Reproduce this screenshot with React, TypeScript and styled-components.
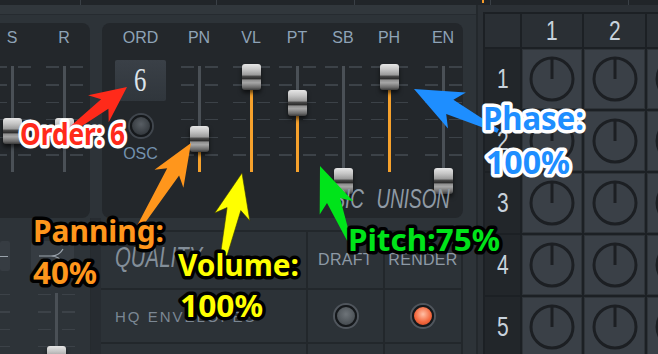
import React from 'react';
import styled, { createGlobalStyle } from 'styled-components';

const GlobalStyle = createGlobalStyle`
  html, body {
    margin: 0;
    padding: 0;
    background: #2b3035;
  }
  body {
    font-family: 'Liberation Sans', Arial, sans-serif;
  }
`;

type Slider = { label: string; value: number; fill: boolean; ml: number };

const SIDE_SLIDERS: Slider[] = [
  { label: 'S', value: 0.48, fill: false, ml: -6.5 },
  { label: 'R', value: 0.48, fill: false, ml: 15 },
];

const MAIN_SLIDERS: Slider[] = [
  { label: 'PN', value: 0.4, fill: true, ml: 14.5 },
  { label: 'VL', value: 1, fill: true, ml: 15 },
  { label: 'PT', value: 0.75, fill: true, ml: 9 },
  { label: 'SB', value: 0, fill: false, ml: 9 },
  { label: 'PH', value: 1, fill: true, ml: 9 },
  { label: 'EN', value: 0, fill: false, ml: 17 },
];

const STRIP = [80, 135, 137, 135, 137, 40];

const TRACK_H = 106;

// handle centre sits between 64px and 168px on the page, track starts at 66px
const handleTop = (v: number) => -2 + (1 - v) * 104;

export default function App() {
  return (
    <>
      <GlobalStyle />
      <Root>
        <TopStrip>
          {STRIP.map((w, i) => (
            <StripSeg key={i} $w={w}>
              {i === 3 && <OrangeMark />}
            </StripSeg>
          ))}
        </TopStrip>

        <Body>
          <LeftPanel>
            <Band />
            <UpperRow>
              <SidePanel>
                {SIDE_SLIDERS.map((s) => (
                  <SliderColumn key={s.label} {...s} />
                ))}
              </SidePanel>

              <MainPanel>
                <Columns>
                  <OrdColumn>
                    <Label>ORD</Label>
                    <OrdBox>
                      <OrdValue>6</OrdValue>
                    </OrdBox>
                    <Toggle />
                    <OscLabel>OSC</OscLabel>
                  </OrdColumn>
                  {MAIN_SLIDERS.map((s) => (
                    <SliderColumn key={s.label} {...s} />
                  ))}
                </Columns>
                <Footer>
                  <ModeText $mr={-19}>SIC</ModeText>
                  <ModeText>UNISON</ModeText>
                </Footer>
              </MainPanel>
            </UpperRow>

            <LowerRow>
              <LowerLeft>
                <BoxRow>
                  <SmallBox $w={10}>
                    <Dash />
                  </SmallBox>
                  <SmallBox $w={43} $ml={21}>
                    <svg width='43' height='30' viewBox='0 0 43 30'>
                      <path
                        d='M8 15 H20 Q28 15 32 8 M20 15 Q28 15 32 22'
                        stroke='#9aa3ac'
                        strokeWidth='1.2'
                        fill='none'
                      />
                    </svg>
                  </SmallBox>
                </BoxRow>
                <LowerSlider>
                  <Ticks $w={10} $h={70} />
                  <Ticks $w={13} $h={70} $ml={23.5} />
                  <Track $h={70}>
                    <Handle style={{ top: 53 }} />
                  </Track>
                  <Ticks $w={13} $h={70} />
                </LowerSlider>
              </LowerLeft>
              <Divider />
              <Table>
                <Cell>
                  <QualityText>QUALITY</QualityText>
                </Cell>
                <Cell $center>
                  <HeadText>DRAFT</HeadText>
                </Cell>
                <Cell $center>
                  <HeadText>RENDER</HeadText>
                </Cell>
                <Cell>
                  <HqText>HQ ENVELOPES</HqText>
                </Cell>
                <Cell $center>
                  <Led />
                </Cell>
                <Cell $center>
                  <Led $on />
                </Cell>
                <Cell />
                <Cell />
                <Cell />
              </Table>
            </LowerRow>
          </LeftPanel>

          <GridWrap>
            <KnobGrid>
              <HeadCell />
              {[1, 2, 3].map((n) => (
                <HeadCell key={n}>
                  <Num>{n}</Num>
                </HeadCell>
              ))}
              {[1, 2, 3, 4, 5].map((r) => (
                <React.Fragment key={r}>
                  <RowCell>
                    <Num>{r}</Num>
                  </RowCell>
                  {[1, 2, 3].map((c) => (
                    <KnobCell key={c}>
                      <Knob />
                    </KnobCell>
                  ))}
                </React.Fragment>
              ))}
            </KnobGrid>
          </GridWrap>
        </Body>

        <Annotations />
      </Root>
    </>
  );
}

function SliderColumn({ label, value, fill, ml }: Slider) {
  const top = handleTop(value);
  const split = Math.max(0, ((top + 13) / TRACK_H) * 100);
  return (
    <Column $ml={ml}>
      <Label>{label}</Label>
      <SliderBody>
        <Ticks $w={13} $h={TRACK_H} />
        <Track $h={TRACK_H} $fill={fill} $split={split}>
          <Handle style={{ top }} />
        </Track>
        <Ticks $w={13} $h={TRACK_H} />
      </SliderBody>
    </Column>
  );
}

function Knob() {
  return (
    <svg width='46' height='46' viewBox='0 0 46 46'>
      <circle cx='23' cy='23' r='21' stroke='#1c1f23' strokeWidth='3' fill='none' />
      <line x1='23' y1='3' x2='23' y2='23' stroke='#1c1f23' strokeWidth='3' />
    </svg>
  );
}

function arrow(tx: number, ty: number, px: number, py: number, head: number, half: number, shaft: number) {
  const dx = px - tx;
  const dy = py - ty;
  const len = Math.hypot(dx, dy);
  const ux = dx / len;
  const uy = dy / len;
  const nx = -uy;
  const ny = ux;
  const bx = px - ux * head;
  const by = py - uy * head;
  const back = 8;
  const pts = [
    [tx + nx * 2, ty + ny * 2],
    [bx + nx * shaft, by + ny * shaft],
    [bx - ux * back + nx * half, by - uy * back + ny * half],
    [px, py],
    [bx - ux * back - nx * half, by - uy * back - ny * half],
    [bx - nx * shaft, by - ny * shaft],
    [tx - nx * 2, ty - ny * 2],
  ];
  return pts.map((p) => p.map((n) => n.toFixed(1)).join(',')).join(' ');
}

type Note = { text: string; x: number; y: number; size: number; len: number; fill: string; stroke: string };

const NOTES: Note[] = [
  { text: 'Order: 6', x: 20, y: 145, size: 31, len: 105, fill: '#ff2a1a', stroke: '#ffffff' },
  { text: 'Panning:', x: 33, y: 242, size: 30, len: 131, fill: '#ff961c', stroke: '#000000' },
  { text: '40%', x: 33, y: 284, size: 30, len: 64, fill: '#ff961c', stroke: '#000000' },
  { text: 'Volume:', x: 178, y: 276, size: 30, len: 121, fill: '#ffff00', stroke: '#000000' },
  { text: '100%', x: 180, y: 317, size: 30, len: 83, fill: '#ffff00', stroke: '#000000' },
  { text: 'Pitch:75%', x: 348, y: 251, size: 31, len: 152, fill: '#00e41a', stroke: '#000000' },
  { text: 'Phase:', x: 483, y: 130, size: 32, len: 101, fill: '#1e8eff', stroke: '#ffffff' },
  { text: '100%', x: 486, y: 174, size: 32, len: 84, fill: '#1e8eff', stroke: '#ffffff' },
];

function Annotations() {
  return (
    <Overlay width='658' height='354' viewBox='0 0 658 354'>
      <polygon points={arrow(60, 138, 127, 87, 28, 17, 6)} fill='#ff2a1a' />
      <polygon points={arrow(136, 232, 191, 143, 34, 17, 7)} fill='#ff961c' />
      <polygon points={arrow(220, 272, 242, 173, 37, 18, 7)} fill='#ffff00' stroke='#3a3a00' strokeWidth='0.6' />
      <polygon points={arrow(349, 240, 320, 166, 37, 18, 7)} fill='#00e41a' />
      <polygon points={arrow(498, 131, 414, 89, 40, 20, 8)} fill='#1e8eff' />
      {NOTES.map((n) => (
        <NoteText
          key={n.text + n.x}
          x={n.x}
          y={n.y}
          fontSize={n.size}
          textLength={n.len}
          lengthAdjust='spacingAndGlyphs'
          fill={n.fill}
          stroke={n.stroke}
        >
          {n.text}
        </NoteText>
      ))}
    </Overlay>
  );
}

const Root = styled.div`
  position: relative;
  width: 658px;
  height: 354px;
  overflow: hidden;
  background: #2b3035;
  display: flex;
  flex-direction: column;
`;

const TopStrip = styled.div`
  flex: none;
  height: 5px;
  display: flex;
  background: #212529;
`;

const StripSeg = styled.div<{ $w: number }>`
  flex: none;
  width: ${(p) => p.$w}px;
  border-right: 1px solid #3a4046;
  display: flex;
  align-items: flex-start;
`;

const OrangeMark = styled.div`
  width: 2px;
  height: 3px;
  margin-left: 127px;
  background: #f59b2a;
`;

const Body = styled.div`
  flex: 1;
  display: flex;
  min-height: 0;
`;

const LeftPanel = styled.div`
  flex: none;
  width: 476px;
  display: flex;
  flex-direction: column;
  background: #2d3338;
  border-right: 2px solid #23282c;
  overflow: hidden;
`;

const Band = styled.div`
  flex: none;
  height: 9px;
  background: #31373c;
  border-bottom: 1px solid #262b30;
`;

const UpperRow = styled.div`
  flex: none;
  display: flex;
  gap: 12px;
  padding-top: 8px;
`;

const SidePanel = styled.div`
  flex: none;
  width: 90px;
  height: 195px;
  display: flex;
  align-items: flex-start;
  padding-top: 7px;
  box-sizing: border-box;
  background: #23272b;
  border-radius: 0 8px 8px 0;
  overflow: hidden;
`;

const MainPanel = styled.div`
  flex: none;
  width: 361px;
  height: 195px;
  display: flex;
  flex-direction: column;
  padding-top: 7px;
  box-sizing: border-box;
  background: #23272b;
  border-radius: 8px;
`;

const Columns = styled.div`
  display: flex;
  align-items: flex-start;
`;

const Column = styled.div<{ $ml: number }>`
  flex: none;
  display: flex;
  flex-direction: column;
  align-items: center;
  margin-left: ${(p) => p.$ml}px;
`;

const OrdColumn = styled.div`
  flex: none;
  width: 51px;
  margin-left: 13px;
  display: flex;
  flex-direction: column;
  align-items: center;
`;

const Label = styled.div`
  height: 16px;
  line-height: 16px;
  font-size: 16px;
  color: #8ea3b7;
  white-space: nowrap;
`;

const OrdBox = styled.div`
  width: 51px;
  height: 41px;
  margin-top: 14px;
  display: flex;
  align-items: center;
  justify-content: center;
  background: linear-gradient(to bottom, #3a4047, #30363c);
  border-radius: 2px;
`;

const OrdValue = styled.span`
  font-family: 'Liberation Serif', 'DejaVu Serif', serif;
  font-size: 33px;
  line-height: 1;
  color: #dde4ea;
  transform: scaleX(0.75);
`;

const Toggle = styled.div`
  width: 18px;
  height: 18px;
  margin-top: 14px;
  border-radius: 50%;
  background: radial-gradient(circle at 50% 40%, #585e64, #34393e 75%);
  border: 2px solid #15181b;
  box-shadow: 0 0 0 2px #40464d;
`;

const OscLabel = styled(Label)`
  margin-top: 9px;
  color: #7391ae;
`;

const SliderBody = styled.div`
  margin-top: 20px;
  display: flex;
  gap: 4px;
`;

const Ticks = styled.div<{ $w: number; $h: number; $ml?: number }>`
  flex: none;
  width: ${(p) => p.$w}px;
  height: ${(p) => p.$h}px;
  margin-left: ${(p) => p.$ml ?? 0}px;
  background: repeating-linear-gradient(to bottom, #3c4248 0 1px, transparent 1px 17.5px);
  background-position: 0 1px;
`;

const Track = styled.div<{ $h: number; $fill?: boolean; $split?: number }>`
  position: relative;
  flex: none;
  width: 3px;
  height: ${(p) => p.$h}px;
  background: ${(p) =>
    p.$fill ? `linear-gradient(to bottom, #4a5056 ${p.$split}%, #f6a12c ${p.$split}%)` : '#4a5056'};
`;

const Handle = styled.div`
  position: absolute;
  left: 50%;
  width: 19px;
  height: 26px;
  margin-left: -9.5px;
  border-radius: 3px;
  background: linear-gradient(
    to bottom,
    #e6e6e6 0%,
    #c4c4c4 22%,
    #9a9a9a 42%,
    #4a4a4a 47%,
    #2e2e2e 56%,
    #8f8f8f 62%,
    #a6a6a6 72%,
    #6a6a6a 90%,
    #3a3a3a 100%
  );
  box-shadow: 0 3px 4px rgba(0, 0, 0, 0.6);
`;

const Footer = styled.div`
  margin-top: auto;
  display: flex;
  justify-content: flex-end;
  align-items: baseline;
  padding: 0 13px 5px 0;
`;

// the FL font is a tall condensed face, squeezed from the right edge
const ModeText = styled.span<{ $mr?: number }>`
  display: inline-block;
  margin-right: ${(p) => p.$mr ?? 0}px;
  font-style: italic;
  font-size: 27px;
  line-height: 28px;
  color: #8f9aa5;
  transform: scaleX(0.7);
  transform-origin: right center;
`;

const LowerRow = styled.div`
  flex: 1;
  display: flex;
  min-height: 0;
`;

const LowerLeft = styled.div`
  flex: none;
  width: 90px;
  padding-top: 23px;
  display: flex;
  flex-direction: column;
`;

const BoxRow = styled.div`
  display: flex;
`;

const SmallBox = styled.div<{ $w: number; $ml?: number }>`
  flex: none;
  width: ${(p) => p.$w}px;
  height: 30px;
  margin-left: ${(p) => p.$ml ?? 0}px;
  background: #363c42;
  border-radius: 2px;
  display: flex;
  align-items: center;
`;

const Dash = styled.div`
  width: 8px;
  height: 1px;
  background: #9aa3ac;
`;

const LowerSlider = styled.div`
  margin-top: 22px;
  display: flex;
  gap: 4px;
`;

const Divider = styled.div`
  flex: none;
  width: 10px;
  background: #272c31;
  border-left: 1px solid #252a2e;
`;

const Table = styled.div`
  flex: none;
  align-self: flex-start;
  margin-top: 12px;
  display: grid;
  grid-template-columns: 205px 75px 76px;
  grid-template-rows: 56px 52px 30px;
  gap: 2px;
  padding: 2px 2px 0 0;
  background: #22272b;
`;

const Cell = styled.div<{ $center?: boolean }>`
  display: flex;
  align-items: center;
  justify-content: ${(p) => (p.$center ? 'center' : 'flex-start')};
  background: #2c3237;
`;

const QualityText = styled.span`
  display: inline-block;
  margin: 0 0 6px 14px;
  font-style: italic;
  font-size: 30px;
  color: #838e99;
  transform: scaleX(0.68);
  transform-origin: left center;
`;

const HeadText = styled.span`
  font-size: 16px;
  color: #8d99a5;
  letter-spacing: 0.3px;
`;

const HqText = styled.span`
  padding-left: 14px;
  font-size: 15px;
  color: #7b8793;
  letter-spacing: 2px;
  white-space: nowrap;
`;

const Led = styled.div<{ $on?: boolean }>`
  width: 18px;
  height: 18px;
  border-radius: 50%;
  border: 2px solid #15181b;
  box-shadow: 0 0 0 2px #50565d;
  background: ${(p) =>
    p.$on
      ? 'radial-gradient(circle at 50% 40%, #ffc0a6, #f46a40 55%, #c8401c)'
      : 'radial-gradient(circle at 50% 40%, #6e7479, #4a5055 70%)'};
`;

const GridWrap = styled.div`
  flex: 1;
  padding: 7px 0 0 5px;
  background: #2b3035;
  overflow: hidden;
`;

const KnobGrid = styled.div`
  display: grid;
  grid-template-columns: 35px 60px 61px 61px;
  grid-template-rows: 33px;
  grid-auto-rows: 60px;
  gap: 2px;
  padding: 2px;
  width: max-content;
  background: #1c2024;
`;

const HeadCell = styled.div`
  display: flex;
  align-items: center;
  justify-content: center;
  background: #2a2f34;
`;

const RowCell = styled(HeadCell)`
  background: #22262a;
`;

const KnobCell = styled.div`
  display: flex;
  align-items: center;
  justify-content: center;
  background: #3a4047;
  box-shadow: inset 0 0 0 1px #2e3338;
`;

const Num = styled.span`
  display: inline-block;
  font-size: 28px;
  color: #c8d2dc;
  transform: scaleX(0.75);
`;

const Overlay = styled.svg`
  position: absolute;
  inset: 0;
  pointer-events: none;
`;

const NoteText = styled.text`
  font-family: 'Noto Sans', 'Liberation Sans', sans-serif;
  font-weight: 700;
  stroke-width: 7px;
  stroke-linejoin: round;
  paint-order: stroke fill;
`;
